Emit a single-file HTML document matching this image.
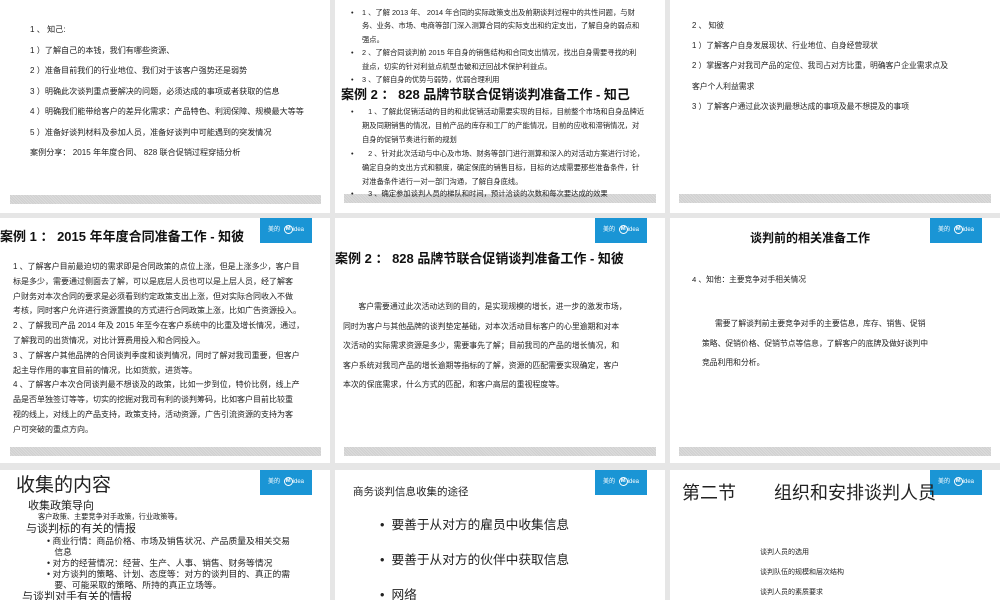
<!DOCTYPE html>
<html><head><meta charset="utf-8"><style>
body{margin:0;width:1000px;height:600px;background:#e6e6e6;position:relative;overflow:hidden;font-family:"Liberation Sans","Noto Sans CJK SC",sans-serif;color:#222}
.s{position:absolute;background:#fff;overflow:hidden}
.bar{position:absolute;height:9px;background:repeating-linear-gradient(45deg,#d0d0d0 0 1px,#dcdcdc 1px 2px)}
.logo{position:absolute;width:52px;height:25px;background:#1a95d5;color:#fff;font-size:6px;line-height:25px;text-align:center;white-space:nowrap}
.logo b{display:inline-block;border:1px solid #fff;border-radius:50%;width:7px;height:7px;line-height:7px;font-size:6px;vertical-align:middle;margin-left:2px}
.t{position:absolute;white-space:nowrap;font-size:8px;line-height:1.2}
.h{font-weight:bold;color:#111}
.b{position:absolute;white-space:nowrap}
</style></head><body>

<!-- Row 1 -->
<div class="s" style="left:0;top:0;width:330px;height:213px">
 <div class="t" style="left:30px;top:20px;font-size:8.1px;line-height:20.5px">1 、 知己:<br>1 ）了解自己的本钱，我们有哪些资源、<br>2 ）准备目前我们的行业地位、我们对于该客户强势还是弱势<br>3 ）明确此次谈判重点要解决的问题，必须达成的事项或者获取的信息<br>4 ）明确我们能带给客户的差异化需求：产品特色、利润保障、规模最大等等<br>5 ）准备好谈判材料及参加人员，准备好谈判中可能遇到的突发情况<br>案例分享： 2015 年年度合同、 828 联合促销过程穿插分析</div>
 <div class="bar" style="left:10px;top:195px;width:311px"></div>
</div>
<div class="s" style="left:335px;top:0;width:330px;height:213px">
 <div class="t" style="left:16px;top:6px;font-size:7.3px;line-height:13.4px">•<br><br><br>•<br><br>•</div>
 <div class="t" style="left:27px;top:6px;font-size:7.3px;line-height:13.4px">1 、了解 2013 年、 2014 年合同的实际政策支出及前期谈判过程中的共性问题，与财<br>务、业务、市场、电商等部门深入测算合同的实际支出和约定支出，了解自身的弱点和<br>强点。<br>2 、了解合同谈判前 2015 年自身的销售结构和合同支出情况，找出自身需要寻找的利<br>益点，切实的针对利益点机型击破和迂回战术保护利益点。<br>3 、了解自身的优势与弱势，优弱合理利用</div>
 <div class="t h" style="left:6px;top:87px;font-size:13px">案例 2 ： 828 品牌节联合促销谈判准备工作 - 知己</div>
 <div class="t" style="left:16px;top:105px;font-size:7.3px;line-height:14px">•<br><br><br>•</div>
 <div class="t" style="left:27px;top:105px;font-size:7.3px;line-height:14px">&nbsp;&nbsp;&nbsp;1 、了解此促销活动的目的和此促销活动需要实现的目标，目前整个市场和自身品牌近<br>期及同期销售的情况，目前产品的库存和工厂的产能情况，目前的应收和滞销情况，对<br>自身的促销节奏进行新的规划<br>&nbsp;&nbsp;&nbsp;2 、针对此次活动与中心及市场、财务等部门进行测算和深入的对活动方案进行讨论，<br>确定自身的支出方式和额度，确定保底的销售目标，目标的达成需要那些准备条件，针<br>对准备条件进行一对一部门沟通，了解自身底线。</div>
 <div class="bar" style="left:9px;top:194px;width:312px"></div>
 <div class="t" style="left:16px;top:190px;font-size:7.3px">•</div>
 <div class="t" style="left:27px;top:190px;font-size:7.3px">&nbsp;&nbsp;&nbsp;3 、确定参加谈判人员的梯队和时间，预计洽谈的次数和每次要达成的效果</div>
</div>
<div class="s" style="left:670px;top:0;width:330px;height:213px">
 <div class="t" style="left:22px;top:16px;font-size:7.8px;line-height:20.2px">2 、 知彼<br>1 ）了解客户自身发展现状、行业地位、自身经营现状<br>2 ）掌握客户对我司产品的定位、我司占对方比重，明确客户企业需求点及<br>客户个人利益需求<br>3 ）了解客户通过此次谈判最想达成的事项及最不想提及的事项</div>
 <div class="bar" style="left:9px;top:194px;width:312px"></div>
</div>

<!-- Row 2 -->
<div class="s" style="left:0;top:218px;width:330px;height:245px">
 <div class="t h" style="left:0;top:11px;font-size:13px">案例 1 ： 2015 年年度合同准备工作 - 知彼</div>
 <div class="logo" style="left:260px;top:0">美的 <b>M</b>idea</div>
 <div class="t" style="left:13px;top:42px;font-size:8px;line-height:14.8px">1 、了解客户目前最迫切的需求即是合同政策的点位上涨，但是上涨多少，客户目<br>标是多少，需要通过侧面去了解，可以是底层人员也可以是上层人员，经了解客<br>户财务对本次合同的要求是必须看到约定政策支出上涨，但对实际合同收入不做<br>考核，同时客户允许进行资源置换的方式进行合同政策上涨，比如广告资源投入。<br>2 、了解我司产品 2014 年及 2015 年至今在客户系统中的比重及增长情况，通过，<br>了解我司的出货情况，对比计算费用投入和合同投入。<br>3 、了解客户其他品牌的合同谈判季度和谈判情况，同时了解对我司重要，但客户<br>起主导作用的事宜目前的情况，比如货款，进货等。<br>4 、了解客户本次合同谈判最不想谈及的政策，比如一步到位，特价比例，线上产<br>品是否单独签订等等，切实的挖掘对我司有利的谈判筹码，比如客户目前比较重<br>视的线上，对线上的产品支持，政策支持，活动资源，广告引流资源的支持为客<br>户可突破的重点方向。</div>
 <div class="bar" style="left:10px;top:229px;width:311px"></div>
</div>
<div class="s" style="left:335px;top:218px;width:330px;height:245px">
 <div class="logo" style="left:260px;top:0">美的 <b>M</b>idea</div>
 <div class="t h" style="left:0;top:33px;font-size:13px">案例 2 ： 828 品牌节联合促销谈判准备工作 - 知彼</div>
 <div class="t" style="left:8px;top:79px;font-size:7.9px;line-height:19.5px">&nbsp;&nbsp;&nbsp;&nbsp;&nbsp;&nbsp;&nbsp;客户需要通过此次活动达到的目的，是实现规模的增长，进一步的激发市场，<br>同时为客户与其他品牌的谈判垫定基础，对本次活动目标客户的心里逾期和对本<br>次活动的实际需求资源是多少，需要事先了解；目前我司的产品的增长情况，和<br>客户系统对我司产品的增长逾期等指标的了解，资源的匹配需要实现确定，客户<br>本次的保底需求，什么方式的匹配，和客户高层的重视程度等。</div>
 <div class="bar" style="left:9px;top:229px;width:312px"></div>
</div>
<div class="s" style="left:670px;top:218px;width:330px;height:245px">
 <div class="t h" style="left:80px;top:13px;font-size:12px">谈判前的相关准备工作</div>
 <div class="logo" style="left:260px;top:0">美的 <b>M</b>idea</div>
 <div class="t" style="left:22px;top:57px;font-size:7.7px">4 、知他：主要竞争对手相关情况</div>
 <div class="t" style="left:32px;top:96px;font-size:7.8px;line-height:19.5px">&nbsp;&nbsp;&nbsp;&nbsp;&nbsp;&nbsp;需要了解谈判前主要竞争对手的主要信息，库存、销售、促销<br>策略、促销价格、促销节点等信息，了解客户的底牌及做好谈判中<br>竞品利用和分析。</div>
 <div class="bar" style="left:9px;top:229px;width:312px"></div>
</div>

<!-- Row 3 -->
<div class="s" style="left:0;top:470px;width:330px;height:130px">
 <div class="t" style="left:16px;top:5px;font-size:19px">收集的内容</div>
 <div class="logo" style="left:260px;top:0">美的 <b>M</b>idea</div>
 <div class="t" style="left:28px;top:30px;font-size:11px">收集政策导向</div>
 <div class="t" style="left:38px;top:43px;font-size:7.2px">客户政策、主要竞争对手政策，行业政策等。</div>
 <div class="t" style="left:26px;top:53px;font-size:11px">与谈判标的有关的情报</div>
 <div class="t" style="left:47px;top:66px;font-size:8.8px;line-height:11px">•&nbsp;商业行情：商品价格、市场及销售状况、产品质量及相关交易<br>&nbsp;&nbsp;&nbsp;信息<br>•&nbsp;对方的经营情况：经营、生产、人事、销售、财务等情况<br>•&nbsp;对方谈判的策略、计划、态度等：对方的谈判目的、真正的需<br>&nbsp;&nbsp;&nbsp;要、可能采取的策略、所持的真正立场等。</div>
 <div class="t" style="left:22px;top:121px;font-size:11px">与谈判对手有关的情报</div>
</div>
<div class="s" style="left:335px;top:470px;width:330px;height:130px">
 <div class="logo" style="left:260px;top:0">美的 <b>M</b>idea</div>
 <div class="t" style="left:18px;top:16px;font-size:10.5px">商务谈判信息收集的途径</div>
 <div class="t" style="left:45px;top:48px;font-size:12.7px">•&nbsp;&nbsp;要善于从对方的雇员中收集信息</div>
 <div class="t" style="left:45px;top:83px;font-size:12.7px">•&nbsp;&nbsp;要善于从对方的伙伴中获取信息</div>
 <div class="t" style="left:45px;top:118px;font-size:12.7px">•&nbsp;&nbsp;网络</div>
</div>
<div class="s" style="left:670px;top:470px;width:330px;height:130px">
 <div class="t" style="left:12px;top:13px;font-size:18px">第二节</div>
 <div class="logo" style="left:260px;top:0">美的 <b>M</b>idea</div>
 <div class="t" style="left:104px;top:13px;font-size:18px">组织和安排谈判人员</div>
 <div class="t" style="left:90px;top:73px;font-size:7px;line-height:20px">谈判人员的选用<br>谈判队伍的规模和层次结构<br>谈判人员的素质要求</div>
</div>
</body></html>
